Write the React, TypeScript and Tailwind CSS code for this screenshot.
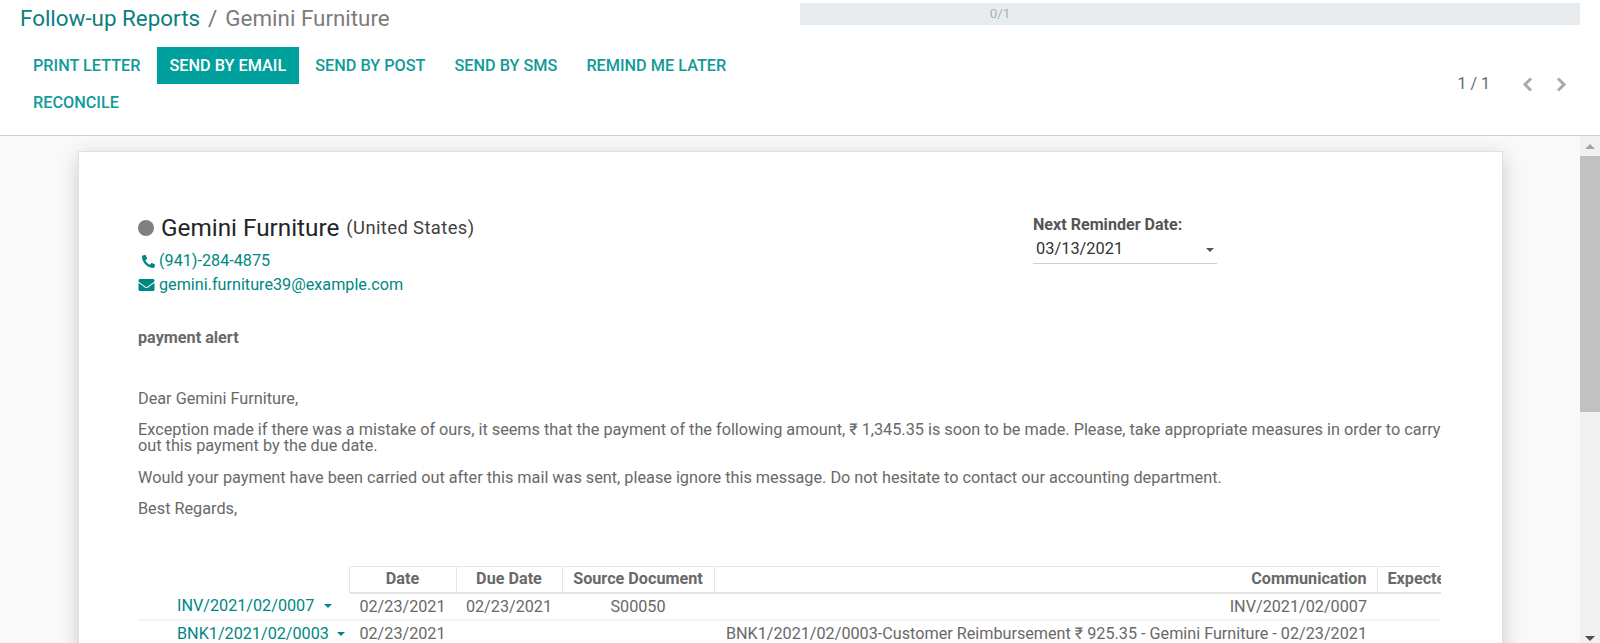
import { FaEnvelope, FaPhone } from "react-icons/fa";

const actions = ["PRINT LETTER", "SEND BY EMAIL", "SEND BY POST", "SEND BY SMS", "REMIND ME LATER", "RECONCILE"];

function Caret({ className = "" }: { className?: string }) {
  return (
    <span
      className={`inline-block h-0 w-0 border-x-[4px] border-t-[4px] border-x-transparent border-t-current ${className}`}
    />
  );
}

function Chevron({ points, className = "" }: { points: string; className?: string }) {
  return (
    <svg viewBox="0 0 11 15" className={`h-[15px] w-[11px] text-[#a9a9a9] ${className}`} fill="none">
      <polyline points={points} stroke="currentColor" strokeWidth="3" />
    </svg>
  );
}

function Header() {
  return (
    <header className="flex h-[136px] shrink-0 flex-col border-b border-[#cfcfcf] bg-white">
      <div className="flex h-[40px] items-start justify-between">
        <div className="pl-5 pt-[4px] text-[22.4px] leading-[28px]">
          <span className="text-[#0b7f80]">Follow-up Reports</span>
          <span className="px-2 text-[#777]">/</span>
          <span className="text-[#7c7c7c]">Gemini Furniture</span>
        </div>
        <div className="mr-5 mt-[3px] flex h-[22px] w-[780px] justify-center bg-[#e9ecef] pr-[380px] text-[13.5px] leading-[20px] text-[#aab1b1]">
          0/1
        </div>
      </div>
      <div className="flex items-start justify-between">
        <div className="mt-[7px] flex w-[780px] flex-wrap gap-x-[3px] pl-[20px]">
          {actions.map((a) => (
            <button
              key={a}
              className={
                a === "SEND BY EMAIL"
                  ? "h-[37px] bg-[#00a09d] px-[13px] pt-[2px] text-[16.25px] font-medium text-white"
                  : "h-[37px] px-[13px] pt-[2px] text-[16.25px] font-medium text-[#129b98]"
              }
            >
              {a}
            </button>
          ))}
        </div>
        <div className="mr-[33px] mt-[34px] flex items-center text-[16px] leading-[20px] text-[#5f6b6b]">
          <span>1 / 1</span>
          <Chevron points="9,1.5 3,7.5 9,13.5" className="ml-[32px]" />
          <Chevron points="2,1.5 8,7.5 2,13.5" className="ml-[23px]" />
        </div>
      </div>
    </header>
  );
}

function Scrollbar() {
  return (
    <div className="flex w-[20px] shrink-0 flex-col items-center bg-[#f1f1f1]">
      <div className="flex h-[20px] shrink-0 items-center justify-center">
        <span className="h-0 w-0 border-x-[5px] border-b-[5px] border-x-transparent border-b-[#a3a3a3]" />
      </div>
      <div className="mx-auto h-[256px] w-full bg-[#c1c1c1]" />
      <div className="flex flex-1 items-end pb-[2px]">
        <span className="h-0 w-0 border-x-[5px] border-t-[5px] border-x-transparent border-t-[#505050]" />
      </div>
    </div>
  );
}

function FollowupTable() {
  const th = "border-b-2 border-l border-t border-[#e6e6e6] text-center font-bold";
  return (
    <div className="mt-[48px] overflow-hidden">
      <table className="w-[1400px] table-fixed border-collapse text-[16.22px] leading-[20px]">
        <colgroup>
          <col className="w-[211px]" />
          <col className="w-[107px]" />
          <col className="w-[106px]" />
          <col className="w-[152px]" />
          <col className="w-[663px]" />
          <col className="w-[161px]" />
        </colgroup>
        <thead>
          <tr className="h-[27px]">
            <th />
            <th className={th}>Date</th>
            <th className={th}>Due Date</th>
            <th className={th}>Source Document</th>
            <th className={`${th} pr-[10px] text-right`}>Communication</th>
            <th className={`${th} pl-[10px] text-left whitespace-nowrap`}>Expected Date</th>
          </tr>
        </thead>
        <tbody>
          <tr className="h-[27px] border-b-2 border-[#f4f4f4]">
            <td className="pl-[39px] text-[#008784]">
              INV/2021/02/0007 <Caret className="mb-[3px] ml-[6px]" />
            </td>
            <td className="text-center">02/23/2021</td>
            <td className="text-center">02/23/2021</td>
            <td className="text-center">S00050</td>
            <td className="pr-[10px] text-right">INV/2021/02/0007</td>
            <td />
          </tr>
          <tr className="h-[27px]">
            <td className="pl-[39px] whitespace-nowrap text-[#008784]">
              BNK1/2021/02/0003 <Caret className="mb-[3px] ml-[4px]" />
            </td>
            <td className="text-center">02/23/2021</td>
            <td />
            <td />
            <td className="pr-[10px] text-right whitespace-nowrap">
              BNK1/2021/02/0003-Customer Reimbursement ₹ 925.35 - Gemini Furniture - 02/23/2021
            </td>
            <td />
          </tr>
        </tbody>
      </table>
    </div>
  );
}

export default function App() {
  return (
    <div className="flex h-[643px] w-[1600px] flex-col overflow-hidden bg-white font-['Roboto',sans-serif] text-[#696969]">
      <Header />
      <div className="flex min-h-0 flex-1">
        <main className="min-w-0 flex-1 overflow-hidden bg-[#f9f9f9] pl-[78px] pr-[77px] pt-[15px]">
          <div className="h-[600px] border border-[#e0e0e0] bg-white pl-[59px] pr-[61px] pt-[60px] shadow-[0_5px_20px_-1px_rgba(0,0,0,0.2)]">
            <div className="flex items-start justify-between">
              <div>
                <div className="flex h-[31px] items-center leading-[30px]">
                  <span className="mr-[7px] h-[16px] w-[16px] rounded-full bg-[#808080]" />
                  <span className="text-[24.3px] text-[#212529]">Gemini Furniture</span>
                  <span className="ml-[7px] text-[18.4px] tracking-[0.4px] text-[#3f3f3f]">(United States)</span>
                </div>
                <div className="mt-[7px] flex h-[22px] items-center pl-[4px] text-[16.2px] text-[#008784]">
                  <FaPhone className="mr-[4px] h-[13px] w-[13px] scale-x-[-1]" />
                  (941)-284-4875
                </div>
                <div className="mt-[2px] flex h-[22px] items-center text-[16.2px] text-[#008784]">
                  <FaEnvelope className="mr-[4px] h-[16px] w-[17px]" />
                  gemini.furniture39@example.com
                </div>
              </div>
              <div className="mr-[224px] mt-[2px] w-[184px]">
                <div className="text-[16.1px] font-bold leading-[22px] text-[#555]">Next Reminder Date:</div>
                <div className="flex h-[28px] items-center justify-between border-b border-[#cfcfcf] pl-[3px] pr-[3px] text-[16.4px] text-[#333]">
                  03/13/2021
                  <Caret className="text-[#555]" />
                </div>
              </div>
            </div>
            <p className="mt-[32px] text-[16.2px] font-bold leading-[20px]">payment alert</p>
            <div className="text-[16.26px] leading-[16.5px]">
              <p className="mt-[43px]">Dear Gemini Furniture,</p>
              <p className="mt-[14px]">
                Exception made if there was a mistake of ours, it seems that the payment of the following amount, ₹ 1,345.35 is soon to be made. Please, take appropriate measures in order to carry out this payment by the due date.
              </p>
              <p className="mt-[15px]">
                Would your payment have been carried out after this mail was sent, please ignore this message. Do not hesitate to contact our accounting department.
              </p>
              <p className="mt-[15px]">Best Regards,</p>
            </div>
            <FollowupTable />
          </div>
        </main>
        <Scrollbar />
      </div>
    </div>
  );
}
